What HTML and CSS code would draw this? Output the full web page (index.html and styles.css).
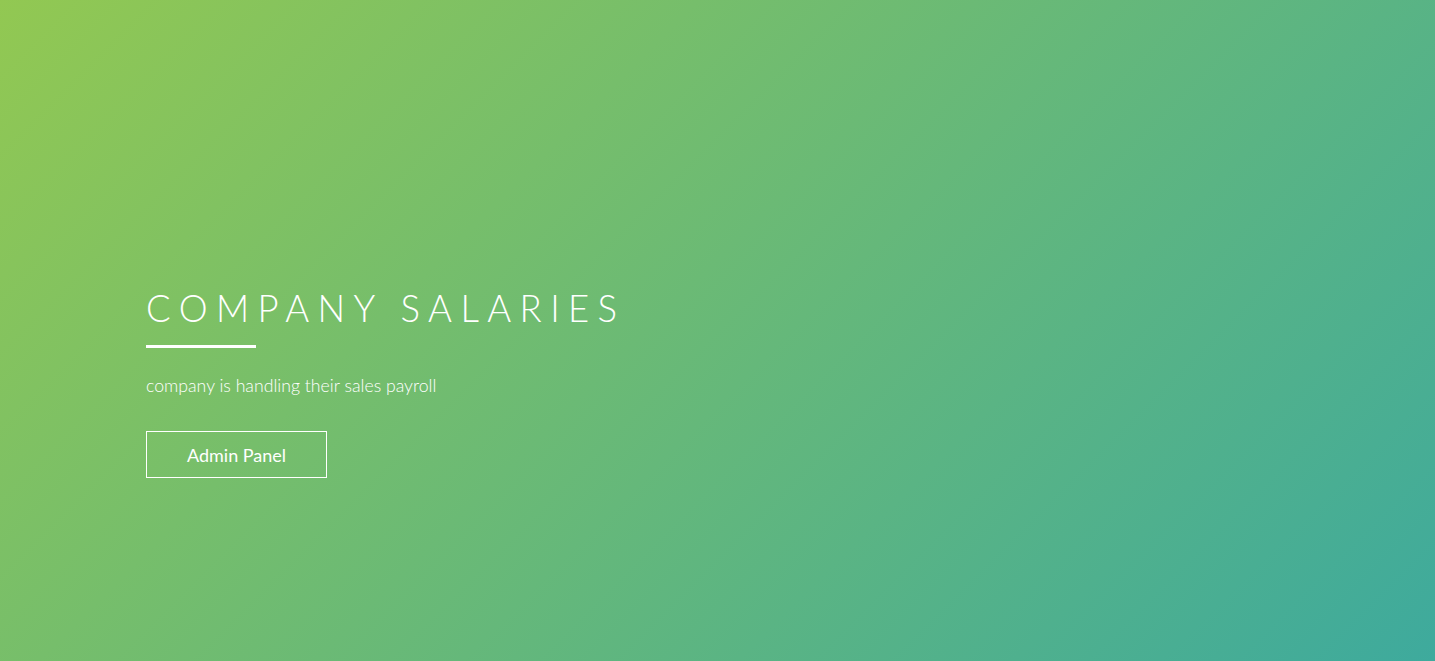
FILE: index.html
```html
<!DOCTYPE html>
<html lang="en">
<head>
<meta charset="utf-8">
<title>Company Salaries</title>
<link rel="stylesheet" href="styles.css">
</head>
<body>
<main class="hero">
  <div class="hero-content">
    <h1 class="hero-title">COMPANY SALARIES</h1>
    <div class="hero-rule"></div>
    <p class="hero-text">company is handling their sales payroll</p>
    <a class="hero-btn" href="#">Admin Panel</a>
  </div>
</main>
</body>
</html>
```
FILE: styles.css
```css
html, body {
  margin: 0;
  padding: 0;
  height: 100%;
}
body {
  font-family: Lato, "Open Sans", sans-serif;
  color: #fff;
}
.hero {
  height: 100%;
  box-sizing: border-box;
  background: linear-gradient(135deg, #92c852, #3eaa9d);
  display: flex;
  align-items: center;
  padding: 103px 146px 0;
}
.hero-content {
  display: flex;
  flex-direction: column;
  align-items: flex-start;
}
.hero-title {
  margin: 0;
  font-weight: 300;
  font-size: 36.5px;
  letter-spacing: 8.4px;
  line-height: 44px;
}
.hero-rule {
  width: 110px;
  height: 3px;
  background: #fff;
  margin-top: 15px;
}
.hero-text {
  margin: 26px 0 0;
  font-size: 17.7px;
  font-weight: 300;
  line-height: 24px;
}
.hero-btn {
  margin-top: 33px;
  width: 181px;
  height: 47px;
  box-sizing: border-box;
  border: 1px solid #fff;
  color: #fff;
  text-decoration: none;
  font-size: 18px;
  font-weight: 400;
  display: flex;
  align-items: center;
  justify-content: center;
}
```
